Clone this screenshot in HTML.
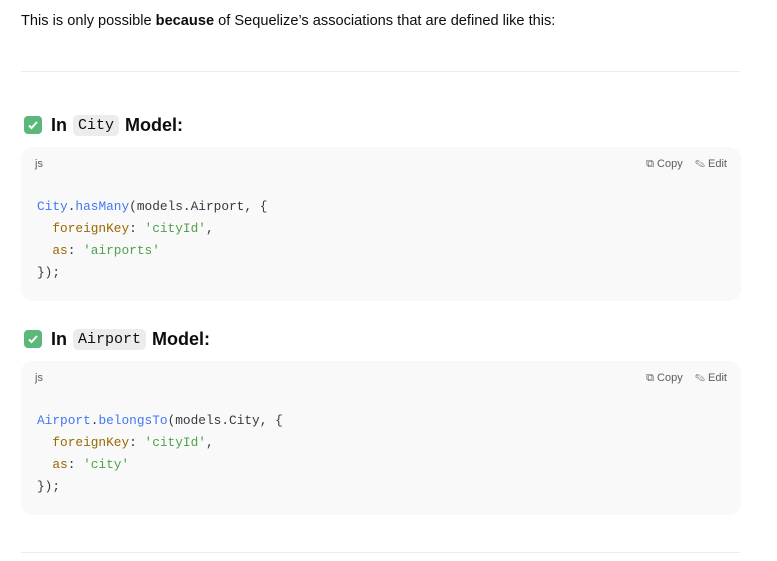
<!DOCTYPE html>
<html><head><meta charset="utf-8"><style>
body{margin:0;width:777px;height:561px;background:#fff;font-family:"Liberation Sans",sans-serif;color:#0d0d0d;position:relative;overflow:hidden}
.p{position:absolute;left:21px;top:11px;font-size:14.6px;line-height:20px}
.hr{position:absolute;left:21px;width:719px;height:1px;background:#ececec}
.h{position:absolute;left:24px;font-size:18px;font-weight:bold;display:flex;align-items:center;height:26px}
.chk{width:18px;height:18px;background:#5cb87a;border-radius:4px;margin-right:9px;display:flex;align-items:center;justify-content:center}
.ic{font-family:"Liberation Mono",monospace;font-weight:normal;font-size:15px;background:#ececec;border-radius:5px;padding:2px 5px;margin:0 6px 0 6px}
.cb{position:absolute;left:21px;width:720px;height:154px;background:#f9f9f9;border-radius:12px}
.lang{position:absolute;left:14px;top:11px;font-size:11px;color:#5d5d5d}
.tools{position:absolute;right:14px;top:11px;font-size:11px;color:#5d5d5d}
pre{position:absolute;left:16px;top:49px;margin:0;font-family:"Liberation Mono",monospace;font-size:12.8px;line-height:22px;color:#383a42}
.b{color:#4078f2}.f{color:#986801}.s{color:#50a14f}
</style></head><body>
<div class="p">This is only possible <b>because</b> of Sequelize’s associations that are defined like this:</div>
<div class="hr" style="top:71px"></div>
<div class="h" style="top:112px"><span class="chk"><svg width="12" height="12" viewBox="0 0 12 12"><path d="M2 6.5l2.5 2.5L10 3" stroke="#fff" stroke-width="2" fill="none"/></svg></span>In<span class="ic">City</span>Model:</div>
<div class="cb" style="top:147px"><div class="lang">js</div><div class="tools">⧉ Copy &nbsp;&nbsp; ✎ Edit</div>
<pre><span class="b">City</span>.<span class="b">hasMany</span>(models.Airport, {
  <span class="f">foreignKey</span>: <span class="s">'cityId'</span>,
  <span class="f">as</span>: <span class="s">'airports'</span>
});</pre></div>
<div class="h" style="top:326px"><span class="chk"><svg width="12" height="12" viewBox="0 0 12 12"><path d="M2 6.5l2.5 2.5L10 3" stroke="#fff" stroke-width="2" fill="none"/></svg></span>In<span class="ic">Airport</span>Model:</div>
<div class="cb" style="top:361px"><div class="lang">js</div><div class="tools">⧉ Copy &nbsp;&nbsp; ✎ Edit</div>
<pre><span class="b">Airport</span>.<span class="b">belongsTo</span>(models.City, {
  <span class="f">foreignKey</span>: <span class="s">'cityId'</span>,
  <span class="f">as</span>: <span class="s">'city'</span>
});</pre></div>
<div class="hr" style="top:552px"></div>
</body></html>
